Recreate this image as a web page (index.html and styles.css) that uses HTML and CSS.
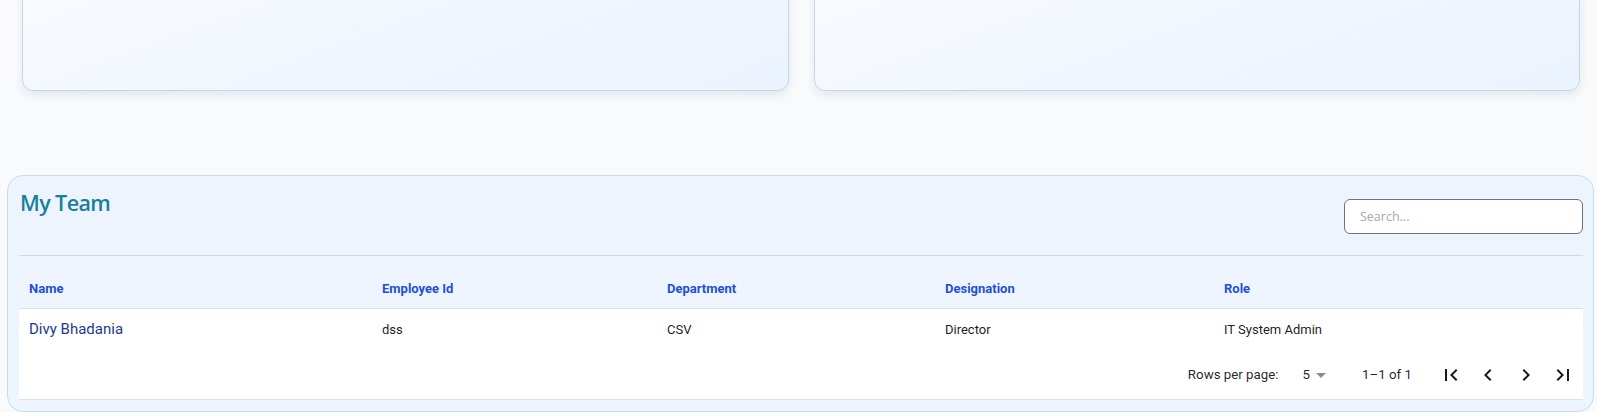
FILE: index.html
```html
<!DOCTYPE html>
<html lang="en">
<head>
<meta charset="utf-8">
<title>My Team</title>
<link rel="stylesheet" href="styles.css">
</head>
<body>
<div class="page">
  <div class="top-row">
    <div class="stat-card"></div>
    <div class="stat-card"></div>
  </div>

  <section class="team-card">
    <div class="team-header">
      <h2 class="team-title">My Team</h2>
      <input class="search" type="text" placeholder="Search...">
    </div>
    <div class="divider"></div>

    <div class="table-wrap">
      <table class="team-table">
        <colgroup>
          <col class="c-name">
          <col class="c-id">
          <col class="c-dept">
          <col class="c-desig">
          <col class="c-role">
        </colgroup>
        <thead>
          <tr>
            <th>Name</th>
            <th>Employee Id</th>
            <th>Department</th>
            <th>Designation</th>
            <th>Role</th>
          </tr>
        </thead>
        <tbody>
          <tr>
            <td class="name-cell">Divy Bhadania</td>
            <td>dss</td>
            <td>CSV</td>
            <td>Director</td>
            <td>IT System Admin</td>
          </tr>
        </tbody>
      </table>
      <div class="pagination">
        <span class="rpp-label">Rows per page:</span>
        <div class="rpp-select">
          <span>5</span>
          <svg class="drop" viewBox="0 0 24 24" width="24" height="24"><path d="M7 10l5 5 5-5z"/></svg>
        </div>
        <span class="displayed">1–1 of 1</span>
        <div class="actions">
          <button class="icon-btn" aria-label="first page"><svg viewBox="0 0 24 24" width="24" height="24"><path d="M18.41 16.59L13.82 12l4.59-4.59L17 6l-6 6 6 6zM6 6h2v12H6z"/></svg></button>
          <button class="icon-btn" aria-label="previous page"><svg viewBox="0 0 24 24" width="24" height="24"><path d="M15.41 16.59L10.83 12l4.58-4.59L14 6l-6 6 6 6 1.41-1.41z"/></svg></button>
          <button class="icon-btn" aria-label="next page"><svg viewBox="0 0 24 24" width="24" height="24"><path d="M8.59 16.59L13.17 12 8.59 7.41 10 6l6 6-6 6-1.41-1.41z"/></svg></button>
          <button class="icon-btn" aria-label="last page"><svg viewBox="0 0 24 24" width="24" height="24"><path d="M5.59 7.41L10.18 12l-4.59 4.59L7 18l6-6-6-6zM16 6h2v12h-2z"/></svg></button>
        </div>
      </div>
    </div>
  </section>
</div>
</body>
</html>
```

FILE: styles.css
```css
* { box-sizing: border-box; }

html, body {
  margin: 0;
  padding: 0;
  background: #f8fafc;
}

html {
  overflow: hidden;
}

body {
  font-family: Roboto, "Liberation Sans", Arial, sans-serif;
  color: rgba(0, 0, 0, 0.87);
}

.page {
  width: 1597px;
  display: flow-root;
}

.top-row {
  display: grid;
  grid-template-columns: 767px 766px;
  column-gap: 25px;
  padding: 0 17px 0 22px;
  margin-top: -20px;
}

.stat-card {
  height: 111px;
  border: 1px solid #bed7f6;
  border-radius: 11px;
  background: linear-gradient(160deg, #f8fbff 0%, #f1f6fe 50%, #ebf3fe 100%);
  box-shadow: 0 4px 10px rgba(30, 41, 59, 0.09);
}

.team-card {
  margin: 84px 3px 0 7px;
  height: 237px;
  border: 1px solid #c4dbf7;
  border-radius: 16px;
  background: linear-gradient(180deg, #edf4fe 0%, #eef5ff 100%);
  padding: 0 10px 0 11px;
}

.team-header {
  display: flex;
  justify-content: space-between;
  align-items: flex-start;
  height: 79px;
}

.team-title {
  margin: 12px 0 0 1px;
  font-family: "Open Sans", "Noto Sans", sans-serif;
  font-weight: 600;
  font-size: 21.5px;
  line-height: 30px;
  color: #1a7f9b;
  letter-spacing: -0.6px;
}

.search {
  margin-top: 23px;
  width: 239px;
  height: 35px;
  border: 1px solid #667489;
  border-radius: 6px;
  background: #ffffff;
  padding: 0 15px;
  font-family: "Open Sans", "Noto Sans", sans-serif;
  font-size: 12.5px;
  color: #333;
  outline: none;
}

.search::placeholder {
  color: #a3a8b3;
}

.divider {
  height: 1px;
  background: #c4dbf7;
}

.table-wrap {
  margin-top: 14px;
  border-bottom: 1px solid #dbe1ea;
}

.team-table {
  width: 100%;
  border-collapse: collapse;
  table-layout: fixed;
}

.c-name { width: 353px; }
.c-id { width: 285px; }
.c-dept { width: 278px; }
.c-desig { width: 279px; }

.team-table th {
  height: 38px;
  padding: 0 10px;
  text-align: left;
  font-size: 13px;
  font-weight: 700;
  color: #1f4fd8;
  background: #eff5ff;
  border-bottom: 1px solid #d9e0ea;
}

.team-table td {
  height: 42px;
  padding: 0 10px;
  font-size: 13px;
  background: #ffffff;
  color: rgba(0, 0, 0, 0.9);
}

.team-table td.name-cell {
  font-size: 15px;
  color: #1e3a8a;
}

.pagination {
  display: flex;
  align-items: center;
  justify-content: flex-end;
  height: 49px;
  background: #ffffff;
  font-size: 13.3px;
  padding-right: 1px;
}

.rpp-select {
  display: flex;
  align-items: center;
  margin-left: 24px;
  margin-right: 29px;
}

.rpp-select span {
  margin-right: -1px;
}

.drop {
  fill: rgba(0, 0, 0, 0.45);
}

.actions {
  display: flex;
  margin-left: 20px;
}

.icon-btn {
  width: 37.5px;
  height: 37px;
  padding: 0;
  border: none;
  background: transparent;
  display: flex;
  align-items: center;
  justify-content: center;
}

.icon-btn svg {
  fill: rgba(0, 0, 0, 0.9);
}
```
